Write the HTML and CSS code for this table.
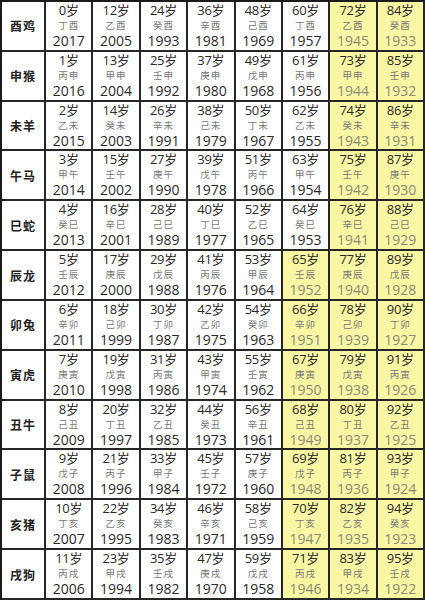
FILE: index.html
```html
<!DOCTYPE html>
<html lang="zh">
<head>
<meta charset="utf-8">
<title>生肖年龄对照表</title>
<link rel="stylesheet" href="styles.css">
</head>
<body>
<div class="chart">
  <div class="lbl">酉鸡</div>
  <div class="cell"><span class="age">0岁</span><span class="gz">丁酉</span><span class="yr">2017</span></div>
  <div class="cell"><span class="age">12岁</span><span class="gz">乙酉</span><span class="yr">2005</span></div>
  <div class="cell"><span class="age">24岁</span><span class="gz">癸酉</span><span class="yr">1993</span></div>
  <div class="cell"><span class="age">36岁</span><span class="gz">辛酉</span><span class="yr">1981</span></div>
  <div class="cell"><span class="age">48岁</span><span class="gz">己酉</span><span class="yr">1969</span></div>
  <div class="cell"><span class="age">60岁</span><span class="gz">丁酉</span><span class="yr">1957</span></div>
  <div class="cell hi"><span class="age">72岁</span><span class="gz">乙酉</span><span class="yr">1945</span></div>
  <div class="cell hi"><span class="age">84岁</span><span class="gz">癸酉</span><span class="yr">1933</span></div>

  <div class="lbl">申猴</div>
  <div class="cell"><span class="age">1岁</span><span class="gz">丙申</span><span class="yr">2016</span></div>
  <div class="cell"><span class="age">13岁</span><span class="gz">甲申</span><span class="yr">2004</span></div>
  <div class="cell"><span class="age">25岁</span><span class="gz">壬申</span><span class="yr">1992</span></div>
  <div class="cell"><span class="age">37岁</span><span class="gz">庚申</span><span class="yr">1980</span></div>
  <div class="cell"><span class="age">49岁</span><span class="gz">戊申</span><span class="yr">1968</span></div>
  <div class="cell"><span class="age">61岁</span><span class="gz">丙申</span><span class="yr">1956</span></div>
  <div class="cell hi"><span class="age">73岁</span><span class="gz">甲申</span><span class="yr">1944</span></div>
  <div class="cell hi"><span class="age">85岁</span><span class="gz">壬申</span><span class="yr">1932</span></div>

  <div class="lbl">未羊</div>
  <div class="cell"><span class="age">2岁</span><span class="gz">乙未</span><span class="yr">2015</span></div>
  <div class="cell"><span class="age">14岁</span><span class="gz">癸未</span><span class="yr">2003</span></div>
  <div class="cell"><span class="age">26岁</span><span class="gz">辛未</span><span class="yr">1991</span></div>
  <div class="cell"><span class="age">38岁</span><span class="gz">己未</span><span class="yr">1979</span></div>
  <div class="cell"><span class="age">50岁</span><span class="gz">丁未</span><span class="yr">1967</span></div>
  <div class="cell"><span class="age">62岁</span><span class="gz">乙未</span><span class="yr">1955</span></div>
  <div class="cell hi"><span class="age">74岁</span><span class="gz">癸未</span><span class="yr">1943</span></div>
  <div class="cell hi"><span class="age">86岁</span><span class="gz">辛未</span><span class="yr">1931</span></div>

  <div class="lbl">午马</div>
  <div class="cell"><span class="age">3岁</span><span class="gz">甲午</span><span class="yr">2014</span></div>
  <div class="cell"><span class="age">15岁</span><span class="gz">壬午</span><span class="yr">2002</span></div>
  <div class="cell"><span class="age">27岁</span><span class="gz">庚午</span><span class="yr">1990</span></div>
  <div class="cell"><span class="age">39岁</span><span class="gz">戊午</span><span class="yr">1978</span></div>
  <div class="cell"><span class="age">51岁</span><span class="gz">丙午</span><span class="yr">1966</span></div>
  <div class="cell"><span class="age">63岁</span><span class="gz">甲午</span><span class="yr">1954</span></div>
  <div class="cell hi"><span class="age">75岁</span><span class="gz">壬午</span><span class="yr">1942</span></div>
  <div class="cell hi"><span class="age">87岁</span><span class="gz">庚午</span><span class="yr">1930</span></div>

  <div class="lbl">巳蛇</div>
  <div class="cell"><span class="age">4岁</span><span class="gz">癸巳</span><span class="yr">2013</span></div>
  <div class="cell"><span class="age">16岁</span><span class="gz">辛巳</span><span class="yr">2001</span></div>
  <div class="cell"><span class="age">28岁</span><span class="gz">己巳</span><span class="yr">1989</span></div>
  <div class="cell"><span class="age">40岁</span><span class="gz">丁巳</span><span class="yr">1977</span></div>
  <div class="cell"><span class="age">52岁</span><span class="gz">乙巳</span><span class="yr">1965</span></div>
  <div class="cell"><span class="age">64岁</span><span class="gz">癸巳</span><span class="yr">1953</span></div>
  <div class="cell hi"><span class="age">76岁</span><span class="gz">辛巳</span><span class="yr">1941</span></div>
  <div class="cell hi"><span class="age">88岁</span><span class="gz">己巳</span><span class="yr">1929</span></div>

  <div class="lbl">辰龙</div>
  <div class="cell"><span class="age">5岁</span><span class="gz">壬辰</span><span class="yr">2012</span></div>
  <div class="cell"><span class="age">17岁</span><span class="gz">庚辰</span><span class="yr">2000</span></div>
  <div class="cell"><span class="age">29岁</span><span class="gz">戊辰</span><span class="yr">1988</span></div>
  <div class="cell"><span class="age">41岁</span><span class="gz">丙辰</span><span class="yr">1976</span></div>
  <div class="cell"><span class="age">53岁</span><span class="gz">甲辰</span><span class="yr">1964</span></div>
  <div class="cell hi"><span class="age">65岁</span><span class="gz">壬辰</span><span class="yr">1952</span></div>
  <div class="cell hi"><span class="age">77岁</span><span class="gz">庚辰</span><span class="yr">1940</span></div>
  <div class="cell hi"><span class="age">89岁</span><span class="gz">戊辰</span><span class="yr">1928</span></div>

  <div class="lbl">卯兔</div>
  <div class="cell"><span class="age">6岁</span><span class="gz">辛卯</span><span class="yr">2011</span></div>
  <div class="cell"><span class="age">18岁</span><span class="gz">己卯</span><span class="yr">1999</span></div>
  <div class="cell"><span class="age">30岁</span><span class="gz">丁卯</span><span class="yr">1987</span></div>
  <div class="cell"><span class="age">42岁</span><span class="gz">乙卯</span><span class="yr">1975</span></div>
  <div class="cell"><span class="age">54岁</span><span class="gz">癸卯</span><span class="yr">1963</span></div>
  <div class="cell hi"><span class="age">66岁</span><span class="gz">辛卯</span><span class="yr">1951</span></div>
  <div class="cell hi"><span class="age">78岁</span><span class="gz">己卯</span><span class="yr">1939</span></div>
  <div class="cell hi"><span class="age">90岁</span><span class="gz">丁卯</span><span class="yr">1927</span></div>

  <div class="lbl">寅虎</div>
  <div class="cell"><span class="age">7岁</span><span class="gz">庚寅</span><span class="yr">2010</span></div>
  <div class="cell"><span class="age">19岁</span><span class="gz">戊寅</span><span class="yr">1998</span></div>
  <div class="cell"><span class="age">31岁</span><span class="gz">丙寅</span><span class="yr">1986</span></div>
  <div class="cell"><span class="age">43岁</span><span class="gz">甲寅</span><span class="yr">1974</span></div>
  <div class="cell"><span class="age">55岁</span><span class="gz">壬寅</span><span class="yr">1962</span></div>
  <div class="cell hi"><span class="age">67岁</span><span class="gz">庚寅</span><span class="yr">1950</span></div>
  <div class="cell hi"><span class="age">79岁</span><span class="gz">戊寅</span><span class="yr">1938</span></div>
  <div class="cell hi"><span class="age">91岁</span><span class="gz">丙寅</span><span class="yr">1926</span></div>

  <div class="lbl">丑牛</div>
  <div class="cell"><span class="age">8岁</span><span class="gz">己丑</span><span class="yr">2009</span></div>
  <div class="cell"><span class="age">20岁</span><span class="gz">丁丑</span><span class="yr">1997</span></div>
  <div class="cell"><span class="age">32岁</span><span class="gz">乙丑</span><span class="yr">1985</span></div>
  <div class="cell"><span class="age">44岁</span><span class="gz">癸丑</span><span class="yr">1973</span></div>
  <div class="cell"><span class="age">56岁</span><span class="gz">辛丑</span><span class="yr">1961</span></div>
  <div class="cell hi"><span class="age">68岁</span><span class="gz">己丑</span><span class="yr">1949</span></div>
  <div class="cell hi"><span class="age">80岁</span><span class="gz">丁丑</span><span class="yr">1937</span></div>
  <div class="cell hi"><span class="age">92岁</span><span class="gz">乙丑</span><span class="yr">1925</span></div>

  <div class="lbl">子鼠</div>
  <div class="cell"><span class="age">9岁</span><span class="gz">戊子</span><span class="yr">2008</span></div>
  <div class="cell"><span class="age">21岁</span><span class="gz">丙子</span><span class="yr">1996</span></div>
  <div class="cell"><span class="age">33岁</span><span class="gz">甲子</span><span class="yr">1984</span></div>
  <div class="cell"><span class="age">45岁</span><span class="gz">壬子</span><span class="yr">1972</span></div>
  <div class="cell"><span class="age">57岁</span><span class="gz">庚子</span><span class="yr">1960</span></div>
  <div class="cell hi"><span class="age">69岁</span><span class="gz">戊子</span><span class="yr">1948</span></div>
  <div class="cell hi"><span class="age">81岁</span><span class="gz">丙子</span><span class="yr">1936</span></div>
  <div class="cell hi"><span class="age">93岁</span><span class="gz">甲子</span><span class="yr">1924</span></div>

  <div class="lbl">亥猪</div>
  <div class="cell"><span class="age">10岁</span><span class="gz">丁亥</span><span class="yr">2007</span></div>
  <div class="cell"><span class="age">22岁</span><span class="gz">乙亥</span><span class="yr">1995</span></div>
  <div class="cell"><span class="age">34岁</span><span class="gz">癸亥</span><span class="yr">1983</span></div>
  <div class="cell"><span class="age">46岁</span><span class="gz">辛亥</span><span class="yr">1971</span></div>
  <div class="cell"><span class="age">58岁</span><span class="gz">己亥</span><span class="yr">1959</span></div>
  <div class="cell hi"><span class="age">70岁</span><span class="gz">丁亥</span><span class="yr">1947</span></div>
  <div class="cell hi"><span class="age">82岁</span><span class="gz">乙亥</span><span class="yr">1935</span></div>
  <div class="cell hi"><span class="age">94岁</span><span class="gz">癸亥</span><span class="yr">1923</span></div>

  <div class="lbl">戌狗</div>
  <div class="cell"><span class="age">11岁</span><span class="gz">丙戌</span><span class="yr">2006</span></div>
  <div class="cell"><span class="age">23岁</span><span class="gz">甲戌</span><span class="yr">1994</span></div>
  <div class="cell"><span class="age">35岁</span><span class="gz">壬戌</span><span class="yr">1982</span></div>
  <div class="cell"><span class="age">47岁</span><span class="gz">庚戌</span><span class="yr">1970</span></div>
  <div class="cell"><span class="age">59岁</span><span class="gz">戊戌</span><span class="yr">1958</span></div>
  <div class="cell hi"><span class="age">71岁</span><span class="gz">丙戌</span><span class="yr">1946</span></div>
  <div class="cell hi"><span class="age">83岁</span><span class="gz">甲戌</span><span class="yr">1934</span></div>
  <div class="cell hi"><span class="age">95岁</span><span class="gz">壬戌</span><span class="yr">1922</span></div>
</div>
</body>
</html>
```

FILE: styles.css
```css
html, body {
  margin: 0;
  padding: 0;
  background: #ffffff;
}

body {
  font-family: "Open Sans", "Noto Sans CJK SC", sans-serif;
  color: #222;
}

.chart {
  box-sizing: border-box;
  width: 425px;
  height: 600px;
  display: grid;
  grid-template-columns: 44px repeat(8, 1fr);
  grid-template-rows: repeat(12, 1fr);
  border-top: 2px solid #1a1a1a;
  border-left: 2px solid #1a1a1a;
  background: #fff;
}

.lbl,
.cell {
  box-sizing: border-box;
  border-right: 2px solid #262626;
  border-bottom: 2px solid #262626;
  min-height: 0;
}

.lbl {
  display: flex;
  align-items: center;
  justify-content: center;
  font-family: "Noto Sans CJK SC", sans-serif;
  font-weight: 700;
  font-size: 12px;
  color: #222;
  letter-spacing: 1px;
}

.cell {
  display: flex;
  flex-direction: column;
  align-items: center;
  justify-content: center;
}

.cell.hi {
  background: #f9f7a4;
}

.age {
  font-size: 13px;
  line-height: 15px;
  color: #2a2a2a;
  letter-spacing: -0.3px;
}

.gz {
  font-family: "Noto Sans CJK SC", sans-serif;
  font-size: 9.5px;
  line-height: 15px;
  color: #777;
  letter-spacing: 1px;
}

.yr {
  font-size: 14px;
  line-height: 16px;
  color: #2a2a2a;
}

.hi .yr {
  color: #8a8a78;
}
```
